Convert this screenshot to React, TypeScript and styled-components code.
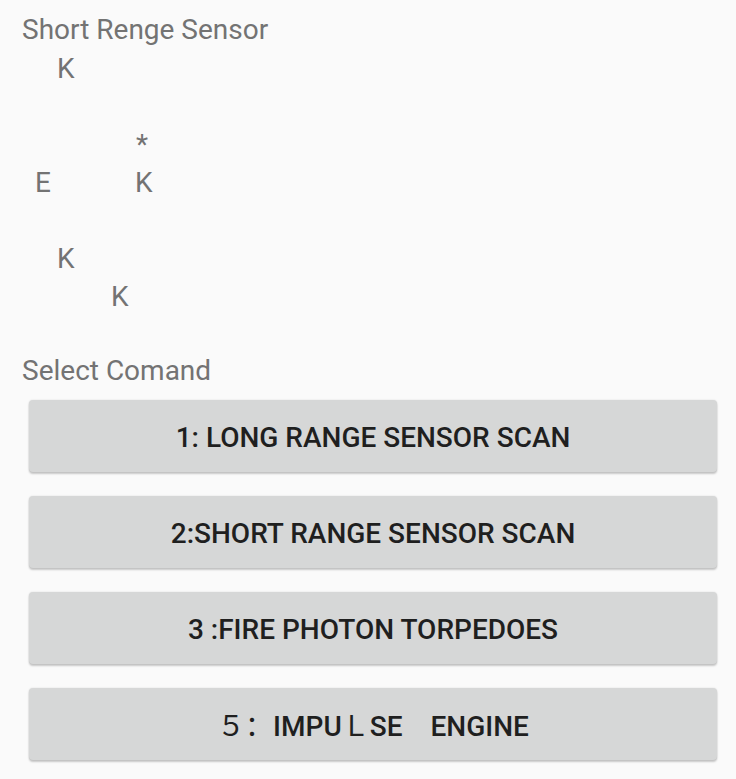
import React from "react";
import styled, { createGlobalStyle } from "styled-components";

const Global = createGlobalStyle`
  html, body {
    margin: 0;
    padding: 0;
    background: #fafafa;
  }
  body {
    font-family: Roboto, "Noto Sans", "Noto Sans CJK SC", sans-serif;
  }
`;

const Screen = styled.div`
  width: 736px;
  min-height: 779px;
  box-sizing: border-box;
  padding: 13px 0 0 22px;
  background: #fafafa;
  display: flex;
  flex-direction: column;
`;

const Caption = styled.div`
  font-size: 28px;
  line-height: 33px;
  color: #737373;
  font-weight: 400;
`;

const SensorGrid = styled.div`
  display: flex;
  flex-direction: column;
  margin-top: 6px;
`;

const SensorRow = styled.div`
  display: flex;
  height: 38px;
  font-size: 28px;
  line-height: 33px;
  color: #737373;
`;

const Mark = styled.span<{ $x: number }>`
  margin-left: ${(p) => p.$x}px;
  display: inline-block;
`;

const CommandCaption = styled(Caption)`
  margin-top: 36px;
`;

const ButtonList = styled.div`
  display: flex;
  flex-direction: column;
  gap: 24px;
  margin: 13px 0 0 7px;
  width: 688px;
`;

const CommandButton = styled.button`
  height: 72px;
  border: none;
  border-radius: 4px;
  background: #d6d7d7;
  box-shadow: 0 2px 2px rgba(0, 0, 0, 0.2), 0 0 2px rgba(0, 0, 0, 0.12);
  color: #1f1f1f;
  font-family: Roboto, "Noto Sans CJK SC", sans-serif;
  font-size: 28px;
  font-weight: 500;
  text-transform: uppercase;
  display: flex;
  align-items: center;
  justify-content: center;
  padding: 3px 0 0;
  cursor: pointer;
`;

const Label = styled.span`
  white-space: pre;
  line-height: 33px;
`;

const Cjk = styled.span`
  font-family: "Noto Sans CJK SC", sans-serif;
  font-weight: 400;
`;

type M = { x: number; c: string };
const rows: M[][] = [
  [{ x: 35, c: "K" }],
  [],
  [{ x: 114, c: "*" }],
  [
    { x: 13, c: "E" },
    { x: 84, c: "K" },
  ],
  [],
  [{ x: 35, c: "K" }],
  [{ x: 89, c: "K" }],
];

export default function App() {
  return (
    <>
      <Global />
      <Screen>
        <Caption>Short Renge Sensor</Caption>
        <SensorGrid>
          {rows.map((r, i) => (
            <SensorRow key={i}>
              {r.map((m, j) => (
                <Mark key={j} $x={m.x}>
                  {m.c}
                </Mark>
              ))}
            </SensorRow>
          ))}
        </SensorGrid>
        <CommandCaption>Select Comand</CommandCaption>
        <ButtonList>
          <CommandButton>
            <Label>1: LONG RANGE SENSOR SCAN</Label>
          </CommandButton>
          <CommandButton>
            <Label>2:SHORT RANGE SENSOR SCAN</Label>
          </CommandButton>
          <CommandButton>
            <Label>3 :FIRE PHOTON TORPEDOES</Label>
          </CommandButton>
          <CommandButton>
            <Label>
              <Cjk>５：</Cjk>
              {"IMPU"}
              <Cjk>Ｌ</Cjk>
              {"SE"}
              <Cjk>{"\u3000"}</Cjk>
              {"ENGINE"}
            </Label>
          </CommandButton>
        </ButtonList>
      </Screen>
    </>
  );
}
